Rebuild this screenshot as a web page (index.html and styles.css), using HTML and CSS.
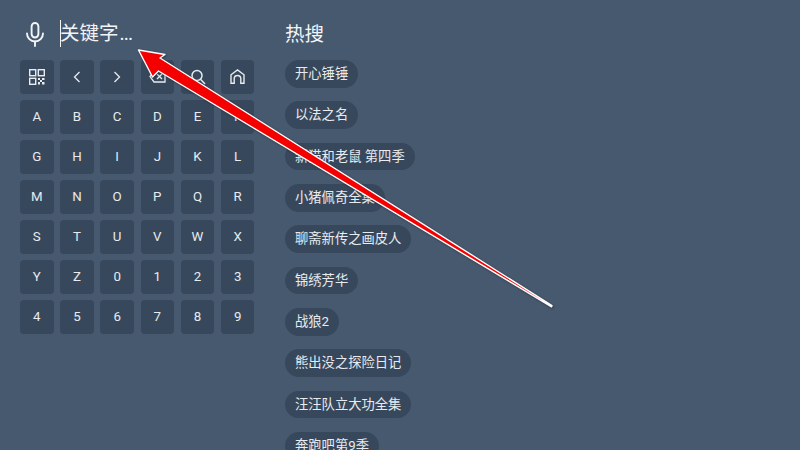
FILE: index.html
```html
<!DOCTYPE html>
<html lang="zh-CN">
<head>
    <meta charset="UTF-8">
    <title>搜索</title>
    <link rel="stylesheet" href="styles.css">
</head>
<body>
    <div class="left">
        <div class="search">
            <svg class="mic" width="20" height="26" viewBox="0 0 20 26" fill="none" stroke="#f2f4f6" stroke-width="1.9" stroke-linecap="round">
                <rect x="6.6" y="2" width="6.8" height="14.5" rx="3.4"/>
                <path d="M2 12.5a8 8 0 0 0 16 0"/>
                <path d="M10 20.5v4.5"/>
            </svg>
            <div class="input"><span class="word">关键字</span><span class="dots">...</span></div>
        </div>

        <div class="keys">
            <div class="key">
                <svg width="16" height="16" viewBox="0 0 16 16" fill="none" stroke="#e8ebef" stroke-width="1.4">
                    <rect x="0.7" y="0.7" width="6" height="6"/>
                    <rect x="9.3" y="0.7" width="6" height="6"/>
                    <rect x="0.7" y="9.3" width="6" height="6"/>
                    <path d="M9 9h2v2H9zM13 9h2.5v2H13zM11 11h2v2h-2zM9 13h2v2.5H9zM13 13h2.5v2.5H13z" fill="#e8ebef" stroke="none"/>
                </svg>
            </div>
            <div class="key">
                <svg width="8" height="12" viewBox="0 0 8 12" fill="none" stroke="#e8ebef" stroke-width="1.3"><path d="M6.5 1L1.5 6l5 5"/></svg>
            </div>
            <div class="key">
                <svg width="8" height="12" viewBox="0 0 8 12" fill="none" stroke="#e8ebef" stroke-width="1.3"><path d="M1.5 1l5 5-5 5"/></svg>
            </div>
            <div class="key">
                <svg width="17" height="13" viewBox="0 0 17 13" fill="none" stroke="#e8ebef" stroke-width="1.3">
                    <path d="M5 1h11v11H5L1 6.5z"/>
                    <path d="M8 4l5 5M13 4l-5 5"/>
                </svg>
            </div>
            <div class="key">
                <svg width="16" height="16" viewBox="0 0 16 16" fill="none" stroke="#e8ebef" stroke-width="1.5">
                    <circle cx="7" cy="6.5" r="5"/>
                    <path d="M10.5 10.2l4.5 4.8"/>
                </svg>
            </div>
            <div class="key">
                <svg width="15" height="15" viewBox="0 0 15 15" fill="none" stroke="#e8ebef" stroke-width="1.4">
                    <path d="M1 14.3V5.8L7.5 0.9 14 5.8v8.5h-3.2V9.8a3.3 3.3 0 0 0-6.6 0v4.5z"/>
                </svg>
            </div>

            <div class="key">A</div><div class="key">B</div><div class="key">C</div>
            <div class="key">D</div><div class="key">E</div><div class="key">F</div>
            <div class="key">G</div><div class="key">H</div><div class="key">I</div>
            <div class="key">J</div><div class="key">K</div><div class="key">L</div>
            <div class="key">M</div><div class="key">N</div><div class="key">O</div>
            <div class="key">P</div><div class="key">Q</div><div class="key">R</div>
            <div class="key">S</div><div class="key">T</div><div class="key">U</div>
            <div class="key">V</div><div class="key">W</div><div class="key">X</div>
            <div class="key">Y</div><div class="key">Z</div><div class="key">0</div>
            <div class="key">1</div><div class="key">2</div><div class="key">3</div>
            <div class="key">4</div><div class="key">5</div><div class="key">6</div>
            <div class="key">7</div><div class="key">8</div><div class="key">9</div>
        </div>
    </div>

    <div class="right">
        <h1 class="title">热搜</h1>
        <div class="hot-list">
            <div class="chip">开心锤锤</div>
            <div class="chip">以法之名</div>
            <div class="chip">新猫和老鼠 第四季</div>
            <div class="chip">小猪佩奇全集</div>
            <div class="chip">聊斋新传之画皮人</div>
            <div class="chip">锦绣芳华</div>
            <div class="chip">战狼2</div>
            <div class="chip">熊出没之探险日记</div>
            <div class="chip">汪汪队立大功全集</div>
            <div class="chip">奔跑吧第9季</div>
        </div>
    </div>

    <!-- red annotation arrow on top of the screenshot -->
    <svg class="arrow" width="800" height="450" viewBox="0 0 800 450">
        <polygon points="138.5,50 165,54.5 160,58 552,305.6 551.6,306.8 158.5,71 152.5,77" fill="#f40000" stroke="#fff" stroke-width="1.4" stroke-linejoin="round"/>
    </svg>
</body>
</html>
```
FILE: styles.css
```css
html, body {
    margin: 0;
    height: 100%;
    overflow: hidden;
}

body {
    display: flex;
    gap: 30px;
    padding: 20px 0 0 20px;
    box-sizing: border-box;
    background: #47596f;
    color: #f2f4f6;
    font-family: Roboto, "Noto Sans CJK SC", sans-serif;
}

.left {
    width: 235px;
    flex: none;
}

.search {
    display: flex;
    align-items: center;
    height: 27px;
    margin-bottom: 13px;
}

.mic {
    margin-left: 5px;
    flex: none;
}

.input {
    margin-left: 15px;
    height: 27px;
    line-height: 27px;
    border-left: 1px solid #f2f4f6;
    font-size: 19.5px;
}

.word {
    margin-left: -1px;
}

.dots {
    margin-left: 1px;
    letter-spacing: -0.9px;
}

.keys {
    display: grid;
    grid-template-columns: repeat(6, 33.5px);
    grid-auto-rows: 33.5px;
    gap: 6.5px 6.7px;
}

.key {
    display: flex;
    align-items: center;
    justify-content: center;
    background: #37485c;
    border-radius: 4px;
    font-size: 13.3px;
    color: #e8ebef;
}

.title {
    margin: 0 0 13px;
    height: 27px;
    line-height: 29px;
    font-size: 19.5px;
    font-weight: 400;
}

.hot-list {
    display: flex;
    flex-direction: column;
    align-items: flex-start;
    gap: 13.85px;
}

.chip {
    height: 27.5px;
    line-height: 27.5px;
    padding: 0 10px;
    background: #37485c;
    border-radius: 14px;
    font-size: 13.3px;
    color: #e8ebef;
    white-space: nowrap;
}

.arrow {
    position: absolute;
    left: 0;
    top: 0;
    filter: drop-shadow(1px 1px 1px rgba(0, 0, 0, 0.35));
}
```
